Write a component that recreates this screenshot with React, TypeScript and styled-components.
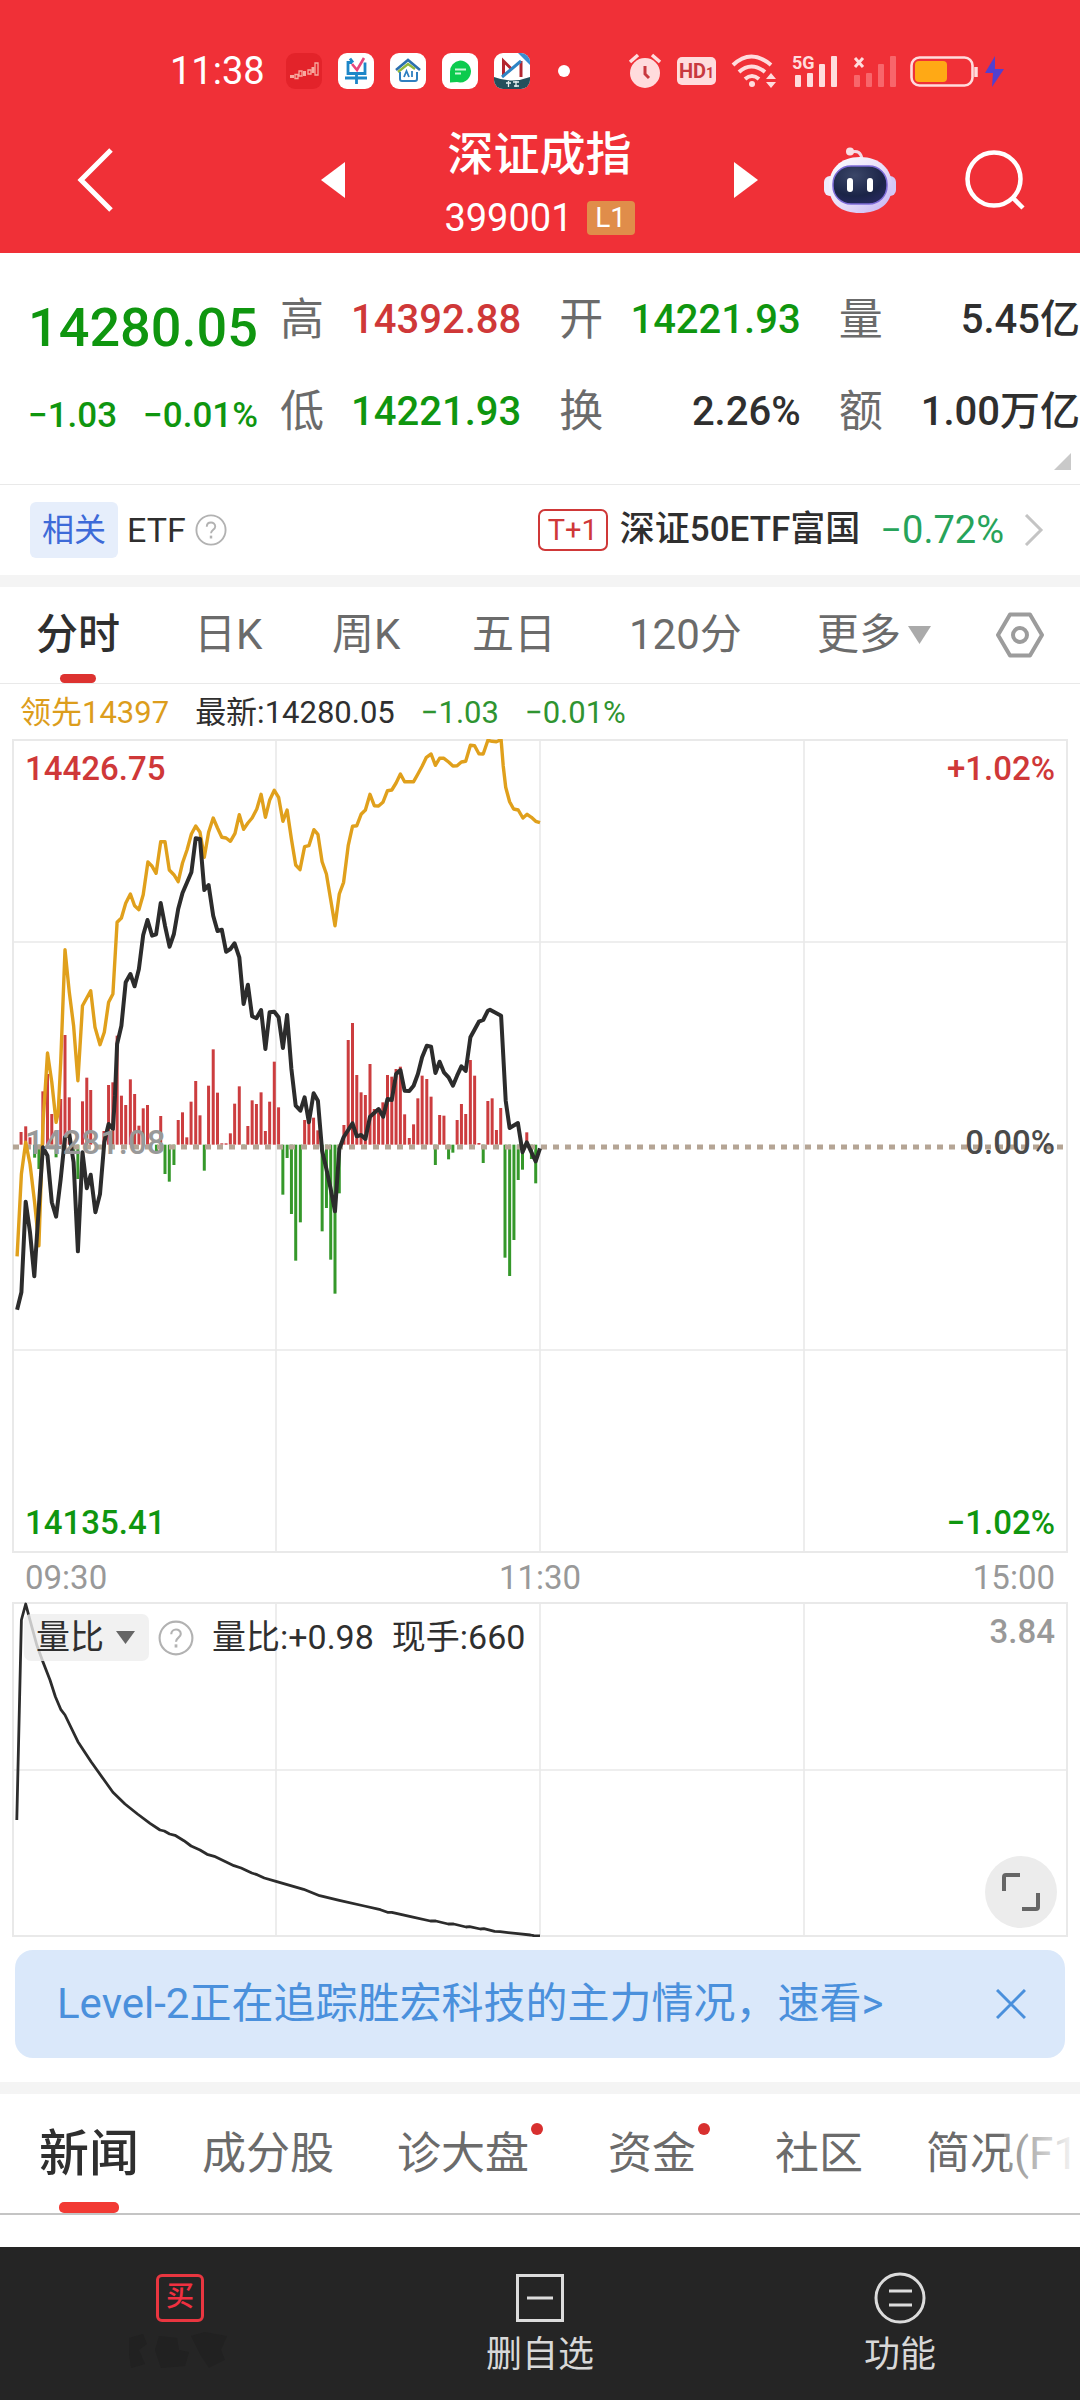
import React from 'react';
import styled, { createGlobalStyle } from 'styled-components';

const color = {
  brand: '#f03037',
  up: '#cf3838',
  down: '#0f960f',
  downSoft: '#2f9431',
  ink: '#2f2f2f',
  sub: '#6b6b6b',
  faint: '#999999',
  lead: '#dc9d1c',
  rule: '#e9e9e9',
  band: '#f4f4f4',
};

const GlobalStyle = createGlobalStyle`
  *, *::before, *::after { box-sizing: border-box; }
  body {
    margin: 0;
    background: #ffffff;
    font-family: Roboto, "Noto Sans CJK SC", sans-serif;
    color: ${color.ink};
    overflow-x: hidden;
  }
  button, select {
    font: inherit;
    color: inherit;
    background: none;
    border: 0;
    margin: 0;
    padding: 0;
  }
  a { color: inherit; text-decoration: none; }
  svg { display: block; }
  dl, dt, dd, h1, p { margin: 0; }
`;

/* ---------- top area ---------- */

const Top = styled.header`
  background: ${color.brand};
  color: #ffffff;
`;

const StatusBar = styled.div`
  display: flex;
  align-items: center;
  justify-content: space-between;
  height: 106px;
  padding: 36px 74px 0 170px;
`;

const StatusGroup = styled.div<{ $gap: number }>`
  display: flex;
  align-items: center;
  gap: ${(p) => p.$gap}px;
`;

const Clock = styled.time`
  font-size: 38px;
  line-height: 48px;
  width: 100px;
`;

const HdBadge = styled.span`
  display: flex;
  align-items: baseline;
  justify-content: center;
  width: 39px;
  height: 28px;
  border-radius: 5px;
  background: #ffdcdd;
  color: #c8393f;
  font-size: 20px;
  line-height: 28px;
  font-weight: 700;
  small { font-size: 14px; }
`;

const Signal = styled.span`
  position: relative;
  display: block;
  width: 44px;
  height: 34px;
`;

const SignalTag = styled.span`
  position: absolute;
  left: 0;
  top: 0;
  color: #ffdcdd;
  font-size: 18px;
  line-height: 18px;
  font-weight: 700;
`;

const NavRow = styled.div`
  display: grid;
  grid-template-columns: 244fr 24fr 390fr 90fr 141fr 59fr;
  align-items: center;
  height: 147px;
  padding: 0 55px 0 77px;
`;

const IconButton = styled.button`
  display: flex;
  align-items: center;
  justify-content: flex-start;
  cursor: pointer;
`;

const TitleBlock = styled.div`
  display: flex;
  flex-direction: column;
  align-items: center;
  padding-top: 13px;
`;

const Title = styled.h1`
  font-size: 46px;
  line-height: 64px;
  font-weight: 500;
`;

const CodeLine = styled.p`
  display: flex;
  align-items: center;
  gap: 14px;
  font-size: 38px;
  line-height: 64px;
`;

const LevelBadge = styled.span`
  width: 48px;
  border-radius: 4px;
  background: #e08d4a;
  font-size: 28px;
  line-height: 34px;
  text-align: center;
`;

/* ---------- quote ---------- */

const Quote = styled.section`
  position: relative;
  display: flex;
  padding: 37px 0 38px 28px;
  border-bottom: 1px solid ${color.rule};
`;

const PriceBlock = styled.div`
  flex: none;
  display: grid;
  gap: 28px;
  width: 252px;
  padding-top: 8px;
  color: ${color.down};
  white-space: nowrap;
`;

const Price = styled.strong`
  font-size: 54px;
  line-height: 60px;
  font-weight: 500;
`;

const Delta = styled.p`
  display: flex;
  gap: 26px;
  font-size: 35px;
  line-height: 60px;
  font-weight: 500;
`;

const Stats = styled.dl`
  flex: 1;
  display: grid;
  align-content: start;
  grid-template-columns: repeat(3, 1fr);
  column-gap: 38px;
  row-gap: 32px;
`;

const Stat = styled.div`
  display: flex;
  justify-content: space-between;
  line-height: 60px;
  white-space: nowrap;
`;

const StatName = styled.dt`
  font-size: 44px;
  color: ${color.sub};
`;

const StatValue = styled.dd<{ $tone: string }>`
  font-size: 40px;
  font-weight: 500;
  color: ${(p) => p.$tone};
`;

const Corner = styled.svg`
  position: absolute;
  right: 9px;
  bottom: 14px;
`;

/* ---------- related fund ---------- */

const Related = styled.section`
  display: flex;
  align-items: center;
  justify-content: space-between;
  height: 90px;
  padding: 0 36px 0 30px;
`;

const RelatedSide = styled.div`
  display: flex;
  align-items: center;
  gap: 9px;
  font-size: 34px;
  line-height: 56px;
`;

const RelatedBadge = styled.span`
  padding: 0 12px;
  border-radius: 6px;
  background: #e6eefb;
  color: #3d6ad8;
  font-size: 32px;
  line-height: 56px;
`;

const RelatedLink = styled.a`
  display: flex;
  align-items: center;
  font-size: 35px;
  line-height: 56px;
  font-weight: 500;
`;

const SettleTag = styled.span`
  width: 70px;
  margin-right: 12px;
  border: 2px solid ${color.up};
  border-radius: 7px;
  color: ${color.up};
  font-size: 29px;
  line-height: 38px;
  text-align: center;
  font-weight: 400;
`;

const RelatedChange = styled.span`
  margin: 0 20px;
  color: #27a35a;
  font-size: 38px;
  font-weight: 400;
`;

const Band = styled.div`
  height: 12px;
  background: ${color.band};
`;

/* ---------- period tabs ---------- */

const PeriodTabs = styled.nav`
  display: grid;
  grid-template-columns: 158fr 138fr 140fr 157fr 188fr 179fr 48fr;
  height: 97px;
  padding: 0 36px;
  border-bottom: 1px solid ${color.rule};
`;

const PeriodTab = styled.button<{ $active?: boolean }>`
  position: relative;
  display: flex;
  align-items: center;
  justify-self: start;
  gap: 7px;
  font-size: 42px;
  line-height: 60px;
  white-space: nowrap;
  cursor: pointer;
  color: ${(p) => (p.$active ? color.ink : color.sub)};
  font-weight: ${(p) => (p.$active ? 500 : 400)};
`;

const Underline = styled.span<{ $w: number; $h: number; $tone: string }>`
  position: absolute;
  left: 50%;
  bottom: 0;
  width: ${(p) => p.$w}px;
  height: ${(p) => p.$h}px;
  margin-left: -${(p) => p.$w / 2}px;
  border-radius: 5px;
  background: ${(p) => p.$tone};
`;

/* ---------- charts ---------- */

const Legend = styled.div`
  display: flex;
  align-items: center;
  gap: 26px;
  height: 55px;
  padding: 2px 20px 0;
  font-size: 31px;
  line-height: 44px;
  white-space: nowrap;
`;

const Tone = styled.span<{ $tone: string }>`
  color: ${(p) => p.$tone};
`;

const ChartFrame = styled.div`
  position: relative;
  margin: 0 12px;
  > svg { width: 100%; height: auto; }
`;

const AxisLabel = styled.span<{ $side: 'left' | 'right'; $at: 'top' | 'middle' | 'bottom'; $tone: string }>`
  position: absolute;
  ${(p) => p.$side}: 13px;
  ${(p) => (p.$at === 'top' ? 'top: 10px;' : p.$at === 'bottom' ? 'bottom: 10px;' : 'top: calc(50% - 23px);')}
  color: ${(p) => p.$tone};
  font-size: 33px;
  line-height: 40px;
  font-weight: 500;
`;

const TimeAxis = styled.div`
  display: grid;
  grid-template-columns: repeat(3, 1fr);
  padding: 3px 25px 0;
  height: 49px;
  color: ${color.faint};
  font-size: 33px;
  line-height: 44px;
  > :nth-child(2) { text-align: center; }
  > :nth-child(3) { text-align: right; }
`;

const IndicatorBar = styled.div`
  position: absolute;
  left: 12px;
  top: 12px;
  display: flex;
  align-items: center;
  font-size: 34px;
  line-height: 47px;
  white-space: nowrap;
`;

const PickerLabel = styled.label`
  position: relative;
  margin-right: 9px;
  border-radius: 7px;
  background: rgba(238, 238, 238, 0.8);
  svg { position: absolute; right: 14px; top: 17px; pointer-events: none; }
`;

const Picker = styled.select`
  display: block;
  appearance: none;
  width: 125px;
  height: 47px;
  padding: 0 0 0 12px;
  font-size: 34px;
  line-height: 47px;
  cursor: pointer;
`;

const IndicatorText = styled.span`
  margin-left: 18px;
`;

const Expand = styled.button`
  position: absolute;
  right: 11px;
  bottom: 9px;
  display: grid;
  place-items: center;
  width: 72px;
  height: 72px;
  border-radius: 50%;
  background: #ececec;
  cursor: pointer;
`;

/* ---------- banner ---------- */

const Banner = styled.aside`
  display: flex;
  align-items: center;
  justify-content: space-between;
  height: 108px;
  margin: 13px 15px 24px;
  padding: 0 39px 0 42px;
  border-radius: 18px;
  background: #dae8fa;
  color: #4a90dc;
  font-size: 42px;
  line-height: 60px;
  white-space: nowrap;
`;

/* ---------- news tabs ---------- */

const NewsTabs = styled.nav`
  display: flex;
  gap: 63px;
  height: 121px;
  padding: 0 0 0 39px;
  border-bottom: 2px solid #c4c4c4;
  overflow: hidden;
  position: relative;
  &::after {
    content: "";
    position: absolute;
    right: 0;
    top: 0;
    width: 76px;
    height: 100%;
    background: linear-gradient(to right, rgba(255, 255, 255, 0.2), #ffffff);
  }
`;

const NewsTab = styled.a<{ $active?: boolean; $dot?: boolean }>`
  position: relative;
  flex: none;
  padding-right: ${(p) => (p.$dot ? 16 : 0)}px;
  color: ${(p) => (p.$active ? color.ink : color.sub)};
  font-size: ${(p) => (p.$active ? 50 : 44)}px;
  font-weight: ${(p) => (p.$active ? 500 : 400)};
  line-height: 121px;
`;

const Dot = styled.span`
  position: absolute;
  right: 2px;
  top: 29px;
  width: 12px;
  height: 12px;
  border-radius: 50%;
  background: #d8302f;
`;

/* ---------- bottom bar ---------- */

const BottomBar = styled.footer`
  display: grid;
  grid-template-columns: repeat(3, 1fr);
  height: 153px;
  margin-top: 32px;
  background: #252525;
  color: #d8d8d8;
`;

const BottomButton = styled.button`
  display: flex;
  flex-direction: column;
  align-items: center;
  gap: 6px;
  padding-top: 25px;
  font-size: 36px;
  line-height: 50px;
  cursor: pointer;
`;

const BuyMark = styled.span`
  width: 48px;
  height: 48px;
  margin: 2px 0;
  border: 3px solid #e93640;
  border-radius: 6px;
  color: #f03040;
  font-size: 28px;
  line-height: 40px;
  font-weight: 500;
`;

/* ---------- series, on a 2.8 x 3 sampling grid ---------- */

type Pt = [number, number];

const pairs = (s: string): Pt[] =>
  s.trim().split(/\s+/).map((p) => p.split(',').map(Number) as Pt);

const leadSeries = pairs(`48,1582 60,1335 72,1240 84,1305 97,1420 109,1550 120,1190 133,972 145,1060 157,1180 163,1150 170,1000
 182,662 194,790 206,890 218,1055 231,830 254,785 266,895 280,947 292,910 304,820 316,795 328,580 340,567 352,523 365,495
 377,530 389,542 401,497 414,399 426,412 437,433 450,338 462,338 474,423 487,437 499,458 511,402 524,362 536,315 548,291
 560,310 572,385 584,310 597,267 609,297 621,325 633,327 645,337 658,313 670,257 682,301 694,282 706,267 719,240 731,196
 743,265 755,214 768,184 780,205 792,277 804,243 816,330 828,408 840,422 853,353 865,350 879,302 890,316 902,398 914,435
 926,512 938,590 950,495 962,460 975,350 987,292 999,290 1011,256 1023,243 1036,196 1048,230 1060,231 1072,220 1085,185
 1097,183 1109,162 1121,135 1133,158 1158,158 1170,135 1182,112 1194,85 1207,75 1219,109 1231,88 1243,88 1256,99 1268,111
 1280,110 1292,99 1304,97 1317,49 1329,50 1341,74 1353,75 1366,34 1378,37 1390,38 1403,32 1409,110 1416,175 1427,218
 1438,240 1451,243 1464,267 1476,256 1488,265 1500,277 1512,281`);

const priceSeries = pairs(`48,1742 60,1690 72,1418 84,1510 96,1642 109,1430 120,1255 133,1280 145,1420 157,1463 170,1350 182,1225
 194,1215 206,1300 218,1567 231,1270 243,1378 254,1337 267,1450 280,1395 292,1240 304,1185 316,1200 322,1100 328,945 340,890
 352,760 365,735 377,772 389,720 401,618 413,573 426,620 437,616 450,522 462,590 475,653 487,615 499,540 511,492 536,430
 548,328 560,330 572,483 584,468 597,560 609,606 621,602 633,668 645,660 657,643 670,685 682,825 694,767 706,862 718,868
 731,843 743,960 755,850 768,848 780,865 792,957 804,858 816,1020 828,1130 841,1145 853,1105 865,1180 878,1093 890,1115
 902,1265 914,1320 926,1380 938,1447 950,1260 962,1225 987,1183 999,1222 1011,1218 1023,1230 1036,1163 1060,1140 1073,1163
 1085,1110 1097,1113 1109,1035 1121,1023 1133,1085 1146,1086 1158,1070 1170,1035 1182,985 1195,950 1207,953 1219,1032
 1231,998 1243,1030 1256,1045 1268,1070 1280,1040 1292,1012 1304,1026 1317,925 1341,878 1353,873 1366,845 1372,842 1403,860
 1416,1115 1427,1197 1450,1182 1463,1270 1475,1240 1500,1297 1512,1258`);

const bars = pairs(`59,1209 72,1192 84,1225 120,1087 133,1035 145,1155 170,1110 182,918 194,1105 231,1117 243,1046 254,1083
 291,1206 304,1068 316,1060 328,920 340,1100 352,1128 365,1051 377,1095 389,1190 401,1138 413,1128 450,1161 499,1173 511,1150
 523,1225 535,1118 548,1056 560,1159 584,1070 597,961 609,1091 621,1243 633,1243 645,1213 657,1124 670,1072 694,1191 706,1114
 718,1125 731,1090 743,1206 755,1118 768,998 780,1135 853,1173 865,1175 878,1166 890,1204 963,1188 975,933 987,882 999,1038
 1011,1090 1023,1098 1036,1005 1048,1140 1060,1150 1072,1120 1085,1038 1097,1043 1109,1020 1121,1013 1133,1156 1146,1227
 1158,1186 1170,1108 1182,1040 1195,1050 1207,1103 1231,1158 1243,1160 1280,1173 1292,1125 1304,1155 1317,993 1329,1040
 1341,1242 1366,1116 1378,1108 1390,1203 1402,1137 1475,1210
 97,1286 109,1320 157,1285 206,1268 218,1350 438,1270 462,1335 474,1358 487,1308 572,1325 682,1257 792,1397 804,1287
 816,1455 828,1595 841,1480 902,1507 914,1437 926,1592 938,1694 950,1393 1219,1308 1256,1291 1268,1271 1353,1302 1414,1586
 1427,1641 1439,1533 1451,1353 1463,1322 1488,1290 1500,1363`);

const ratioSeries = pairs(`47,960 60,360 72,312 85,365 103,435 120,485 140,540 155,590 170,628 182,645 218,725 255,785 290,838
 316,877 350,912 385,942 420,970 448,990 460,993 475,1002 490,1006 515,1022 535,1038 560,1050 580,1063 600,1069 655,1097
 675,1104 705,1119 720,1124 740,1134 775,1145 850,1168 895,1187 950,1201 1020,1218 1065,1229 1085,1237 1097,1237 1150,1250
 1205,1263 1220,1263 1255,1272 1270,1272 1305,1281 1315,1280 1345,1287 1355,1286 1385,1294 1400,1295 1450,1301 1485,1305
 1495,1307 1512,1308`);

const toX = (x: number) => x / 2.8 - 12;
const line = (pts: Pt[], top: number) =>
  pts.map(([x, y]) => `${toX(x).toFixed(1)},${(y / 3 - top).toFixed(1)}`).join(' ');

const BASE = 1247;

function Grid({ height, rows }: { height: number; rows: number[] }) {
  return (
    <g stroke={color.rule} strokeWidth="2" fill="none">
      <rect x="1" y="1" width="1054" height={height - 2} />
      {[264, 528, 792].map((x) => <path key={x} d={`M${x} 0V${height}`} strokeWidth="1.6" />)}
      {rows.map((y) => <path key={y} d={`M0 ${y}H1056`} strokeWidth="1.6" />)}
    </g>
  );
}

function PriceChart() {
  return (
    <svg viewBox="0 0 1056 814" aria-label="分时走势">
      <Grid height={814} rows={[203, 611]} />
      {bars.map(([x, y]) => {
        const up = y < BASE;
        const h = Math.max(Math.abs(y - BASE) / 3, 1);
        return (
          <rect
            key={`${x}`}
            x={toX(x) - 1.5}
            y={up ? BASE / 3 - 10 - h : BASE / 3 - 10}
            width="3"
            height={h}
            fill={up ? '#cc3d3f' : '#35982a'}
          />
        );
      })}
      <path d="M1 408H1055" stroke="#b5a595" strokeWidth="5" strokeDasharray="6 6" />
      <polyline points={line(leadSeries, 10)} fill="none" stroke="#e0a01c" strokeWidth="3.4" strokeLinejoin="round" />
      <polyline points={line(priceSeries, 10)} fill="none" stroke="#2c2c2c" strokeWidth="4" strokeLinejoin="round" />
    </svg>
  );
}

function RatioChart() {
  return (
    <svg viewBox="0 0 1056 335" aria-label="量比走势">
      <Grid height={335} rows={[168]} />
      <polyline points={line(ratioSeries, 102)} fill="none" stroke="#2c2c2c" strokeWidth="2.8" strokeLinejoin="round" />
    </svg>
  );
}

/* ---------- small drawings ---------- */

function Help({ size }: { size: number }) {
  return (
    <svg width={size} height={size} viewBox="0 0 34 34" fill="none" stroke="#b2b2b2" strokeWidth="2" aria-label="说明">
      <circle cx="17" cy="17" r="15.5" />
      <path d="M12.5 13.5c0-6 9-6 9-.3 0 3.400-4.500 3.600-4.500 7.300" />
      <path d="M17 23v3" strokeWidth="2.600" />
    </svg>
  );
}

function AppIcons() {
  return (
    <>
      <svg width="36" height="36" viewBox="0 0 36 36">
        <rect width="36" height="36" rx="9" fill="#e3232a" />
        <g fill="none" stroke="#f7a99f" strokeWidth="1.300">
          <path d="M9 21.500h3v4H9zM13 18h3v5h-3zM22 17h3v4h-3zM29 10h3v12h-3z" />
        </g>
        <path d="M4 22h4v3H4zM17 18h3v5h-3zM25.500 14h3v6h-3z" fill="#f7a99f" />
      </svg>
      <svg width="36" height="36" viewBox="0 0 36 36">
        <rect width="36" height="36" rx="9" fill="#fff" />
        <g fill="none" stroke="#1c86c8" strokeWidth="2.800">
          <path d="M14 9.500H10v11h17V9.500M7 25h22M18.500 20v11" />
          <path d="M12 5.500l3 4" />
        </g>
        <path d="M14 11l5 6 7-12" fill="none" stroke="#e8467c" strokeWidth="2.600" />
      </svg>
      <svg width="36" height="36" viewBox="0 0 36 36">
        <rect width="36" height="36" rx="9" fill="#fff" />
        <path d="M6 17L18 7l12 10" fill="none" stroke="#2b6fae" strokeWidth="2.600" />
        <path d="M8 19l10-8 7 5" fill="none" stroke="#8fb83e" strokeWidth="2.400" />
        <path d="M10 19v7q0 2 2 2h13q2 0 2-2v-7" fill="none" stroke="#2f7fc0" strokeWidth="2" />
        <path d="M14 24l2.500-6 2.500 6M22 18v6" fill="none" stroke="#2f7fc0" strokeWidth="1.800" />
      </svg>
      <svg width="36" height="36" viewBox="0 0 36 36">
        <rect width="36" height="36" rx="9" fill="#fff" />
        <path d="M18 7.500a11 11 0 1 1-3 21.600l-7 .4V19A11 11 0 0 1 18 7.500z" fill="#0ccb4e" />
        <path d="M13 16.500h11M13 20.500h6" stroke="#c9f7d8" strokeWidth="1.800" />
      </svg>
      <svg width="36" height="36" viewBox="0 0 36 36">
        <clipPath id="round"><rect width="36" height="36" rx="9" /></clipPath>
        <g clipPath="url(#round)">
          <rect width="36" height="36" fill="#fff" />
          <path d="M24 0h12v12z" fill="#3a8fd2" />
          <path d="M9.500 23V8l8 8M27 8v16" fill="none" stroke="#b3262f" strokeWidth="3" />
          <path d="M8 24L27 8" stroke="#2e84c4" strokeWidth="3" />
          <path d="M0 24q18 7 36 0v12H0z" fill="#23505c" />
          <path d="M12 30h5M14.500 28v6M19 29h6M20 33h5M22 28v6" stroke="#e7f1f2" strokeWidth="1.300" />
        </g>
      </svg>
    </>
  );
}

function Robot() {
  return (
    <svg width="72" height="66" viewBox="0 0 72 66" aria-hidden="true">
      <defs>
        <linearGradient id="shell" x1="0" y1="0" x2="1" y2="1">
          <stop offset="0" stopColor="#ffffff" />
          <stop offset="0.55" stopColor="#e6dcf8" />
          <stop offset="1" stopColor="#c3b1f4" />
        </linearGradient>
        <radialGradient id="visor" cx="0.4" cy="0.25" r="0.9">
          <stop offset="0" stopColor="#3b4668" />
          <stop offset="0.6" stopColor="#1b2447" />
          <stop offset="1" stopColor="#2b2a66" />
        </radialGradient>
      </defs>
      <path d="M27 5c7-2 10 1 11 7" fill="none" stroke="#f3d9e4" strokeWidth="3" />
      <circle cx="26" cy="4.500" r="4" fill="#f9dfe4" />
      <rect x="0" y="29" width="12" height="20" rx="6" fill="#efeafb" />
      <rect x="60" y="29" width="12" height="20" rx="6" fill="#d3c8f6" />
      <path d="M36 10c20 0 32 12 32 29 0 18-13 27-32 27S5 57 5 39c0-17 11-29 31-29z" fill="url(#shell)" />
      <rect x="9" y="19" width="54" height="38" rx="18" fill="url(#visor)" stroke="#7d6bd8" strokeWidth="1.500" />
      <rect x="23" y="31" width="6" height="14" rx="3" fill="#fff" />
      <rect x="43" y="31" width="6" height="14" rx="3" fill="#fff" />
    </svg>
  );
}

function SignalBars({ faint }: { faint?: boolean }) {
  return (
    <svg width="46" height="34" viewBox="0 0 46 34" fill={faint ? '#f8666b' : '#ffdcdd'}>
      <rect x="3" y="21" width="6" height="12" rx="1" />
      <rect x="15" y="19" width="6" height="14" rx="1" />
      <rect x="27" y="10" width="6" height="23" rx="1" />
      <rect x="39" y="2" width="6" height="31" rx="1" />
      {faint && <path d="M4 4l8 9M12 4l-8 9" stroke="#ffdcdd" strokeWidth="3" />}
    </svg>
  );
}

const stats = [
  ['高', '14392.88', color.up],
  ['开', '14221.93', color.down],
  ['量', '5.45亿', color.ink],
  ['低', '14221.93', color.down],
  ['换', '2.26%', color.ink],
  ['额', '1.00万亿', color.ink],
];

export default function App() {
  return (
    <>
      <GlobalStyle />
      <Top>
        <StatusBar>
          <StatusGroup $gap={16}>
            <Clock>11:38</Clock>
            <AppIcons />
            <svg width="48" height="12" viewBox="0 0 48 12"><circle cx="18" cy="6" r="6" fill="#fff" /></svg>
          </StatusGroup>
          <StatusGroup $gap={15}>
            <svg width="34" height="36" viewBox="0 0 34 36">
              <circle cx="17" cy="20" r="15" fill="#ffdcdd" />
              <path d="M2 9l8-7M32 9l-8-7" stroke="#ffdcdd" strokeWidth="3.500" />
              <path d="M17 13v8l4 4" fill="none" stroke="#c8393f" strokeWidth="3" />
            </svg>
            <HdBadge>HD<small>1</small></HdBadge>
            <svg width="46" height="36" viewBox="0 0 46 36" fill="none" stroke="#ffdcdd" strokeWidth="4">
              <path d="M2 12q18-17 38 0M8 19q12-11 26 0M14 26q7-6 14 0" />
              <circle cx="21" cy="31" r="3" fill="#ffdcdd" stroke="none" />
              <path d="M40 20l5 6H35zM40 35l5-6H35z" fill="#ffdcdd" stroke="none" />
            </svg>
            <Signal><SignalBars /><SignalTag>5G</SignalTag></Signal>
            <Signal><SignalBars faint /></Signal>
            <svg width="96" height="36" viewBox="0 0 96 36">
              <rect x="1.500" y="4.500" width="61" height="28" rx="8" fill="none" stroke="#ffdcdd" strokeWidth="2.600" />
              <rect x="5" y="8" width="32" height="21" rx="4" fill="#ffa915" />
              <path d="M66 14v10" stroke="#ffdcdd" strokeWidth="3.500" />
              <path d="M85 3L75 20h8l-1 14 12-18h-9z" fill="#5340cf" />
            </svg>
          </StatusGroup>
        </StatusBar>
        <NavRow>
          <IconButton aria-label="返回">
            <svg width="36" height="64" viewBox="0 0 36 64" fill="none" stroke="#fff" strokeWidth="5">
              <path d="M34 2L4 32l30 30" />
            </svg>
          </IconButton>
          <IconButton aria-label="上一个">
            <svg width="24" height="36" viewBox="0 0 24 36"><path d="M24 0v36L0 18z" fill="#fff" /></svg>
          </IconButton>
          <TitleBlock>
            <Title>深证成指</Title>
            <CodeLine>399001<LevelBadge>L1</LevelBadge></CodeLine>
          </TitleBlock>
          <IconButton aria-label="下一个">
            <svg width="24" height="36" viewBox="0 0 24 36"><path d="M0 0v36l24-18z" fill="#fff" /></svg>
          </IconButton>
          <IconButton aria-label="智能助手"><Robot /></IconButton>
          <IconButton aria-label="搜索">
            <svg width="60" height="60" viewBox="0 0 60 60" fill="none" stroke="#fff" strokeWidth="4.500">
              <circle cx="29" cy="29" r="26.500" />
              <path d="M47 47l11 11" />
            </svg>
          </IconButton>
        </NavRow>
      </Top>

      <main>
        <Quote>
          <PriceBlock>
            <Price>14280.05</Price>
            <Delta><span>−1.03</span><span>−0.01%</span></Delta>
          </PriceBlock>
          <Stats>
            {stats.map(([name, value, tone]) => (
              <Stat key={name}>
                <StatName>{name}</StatName>
                <StatValue $tone={tone}>{value}</StatValue>
              </Stat>
            ))}
          </Stats>
          <Corner width="17" height="17" viewBox="0 0 17 17"><path d="M17 0v17H0z" fill="#c9c9c9" /></Corner>
        </Quote>

        <Related>
          <RelatedSide>
            <RelatedBadge>相关</RelatedBadge>
            <span>ETF</span>
            <Help size={32} />
          </RelatedSide>
          <RelatedLink href="#etf">
            <SettleTag>T+1</SettleTag>
            深证50ETF富国
            <RelatedChange>−0.72%</RelatedChange>
            <svg width="20" height="32" viewBox="0 0 20 32" fill="none" stroke="#c4c4c4" strokeWidth="3"><path d="M2 1l15 15L2 31" /></svg>
          </RelatedLink>
        </Related>
        <Band />

        <PeriodTabs>
          <PeriodTab $active>分时<Underline $w={36} $h={9} $tone="#dd3230" /></PeriodTab>
          <PeriodTab>日K</PeriodTab>
          <PeriodTab>周K</PeriodTab>
          <PeriodTab>五日</PeriodTab>
          <PeriodTab>120分</PeriodTab>
          <PeriodTab aria-haspopup="menu">
            更多
            <svg width="23" height="18" viewBox="0 0 23 18"><path d="M0 0h23L11.500 18z" fill="#aaaaaa" /></svg>
          </PeriodTab>
          <PeriodTab aria-label="图表设置">
            <svg width="48" height="46" viewBox="0 0 48 46" fill="none" stroke="#9c9c9c" strokeWidth="4" strokeLinejoin="round">
              <path d="M14 2.500h20L46 23 34 43.500H14L2 23z" />
              <circle cx="24" cy="23" r="7" />
            </svg>
          </PeriodTab>
        </PeriodTabs>

        <Legend>
          <Tone $tone={color.lead}>领先14397</Tone>
          <span>最新:14280.05</span>
          <Tone $tone={color.downSoft}>−1.03</Tone>
          <Tone $tone={color.downSoft}>−0.01%</Tone>
        </Legend>

        <ChartFrame>
          <PriceChart />
          <AxisLabel $side="left" $at="top" $tone={color.up}>14426.75</AxisLabel>
          <AxisLabel $side="right" $at="top" $tone={color.up}>+1.02%</AxisLabel>
          <AxisLabel $side="left" $at="middle" $tone={color.faint}>14281.08</AxisLabel>
          <AxisLabel $side="right" $at="middle" $tone="#4a4a4a">0.00%</AxisLabel>
          <AxisLabel $side="left" $at="bottom" $tone={color.down}>14135.41</AxisLabel>
          <AxisLabel $side="right" $at="bottom" $tone={color.down}>−1.02%</AxisLabel>
        </ChartFrame>
        <TimeAxis>
          <span>09:30</span>
          <span>11:30</span>
          <span>15:00</span>
        </TimeAxis>

        <ChartFrame>
          <RatioChart />
          <IndicatorBar>
            <PickerLabel>
              <Picker aria-label="指标"><option>量比</option></Picker>
              <svg width="19" height="13" viewBox="0 0 19 13"><path d="M0 0h19L9.500 13z" fill="#666666" /></svg>
            </PickerLabel>
            <Help size={36} />
            <IndicatorText>量比:+0.98</IndicatorText>
            <IndicatorText>现手:660</IndicatorText>
          </IndicatorBar>
          <AxisLabel $side="right" $at="top" $tone={color.faint}>3.84</AxisLabel>
          <Expand aria-label="全屏">
            <svg width="38" height="38" viewBox="0 0 38 38" fill="none" stroke="#666666" strokeWidth="4">
              <path d="M2 18V4q0-2 2-2h14M36 20v14q0 2-2 2H20" />
            </svg>
          </Expand>
        </ChartFrame>

        <Banner>
          <a href="#level2">Level-2正在追踪胜宏科技的主力情况，速看&gt;</a>
          <IconButton aria-label="关闭">
            <svg width="30" height="30" viewBox="0 0 30 30" stroke="#4a90dc" strokeWidth="3"><path d="M1 1l28 28M29 1L1 29" /></svg>
          </IconButton>
        </Banner>
        <Band />

        <NewsTabs>
          <NewsTab href="#news" $active>新闻<Underline $w={60} $h={11} $tone="#f23a34" /></NewsTab>
          <NewsTab href="#members">成分股</NewsTab>
          <NewsTab href="#diagnosis" $dot>诊大盘<Dot /></NewsTab>
          <NewsTab href="#funds" $dot>资金<Dot /></NewsTab>
          <NewsTab href="#community">社区</NewsTab>
          <NewsTab href="#profile">简况(F10)</NewsTab>
        </NewsTabs>
      </main>

      <BottomBar>
        <BottomButton aria-label="买">
          <BuyMark>买</BuyMark>
          <svg width="110" height="42" viewBox="0 0 110 42" fill="#212121">
            <path d="M4 8l14-4 4 10-8 6 6 14-14 4-2-14zM34 6l18 2 2 12 10 2-4 14-24 2-6-18zM66 6l14-4 22 4-6 14 4 10-16 8-8-12z" />
          </svg>
        </BottomButton>
        <BottomButton>
          <svg width="52" height="52" viewBox="0 0 52 52" fill="none" stroke="#dcdcdc" strokeWidth="3">
            <rect x="3.500" y="3.500" width="45" height="45" />
            <path d="M13 26h26" />
          </svg>
          删自选
        </BottomButton>
        <BottomButton>
          <svg width="52" height="52" viewBox="0 0 52 52" fill="none" stroke="#dcdcdc" strokeWidth="3">
            <circle cx="26" cy="26" r="24" />
            <path d="M15 19h23M15 33h23" />
          </svg>
          功能
        </BottomButton>
      </BottomBar>
    </>
  );
}
